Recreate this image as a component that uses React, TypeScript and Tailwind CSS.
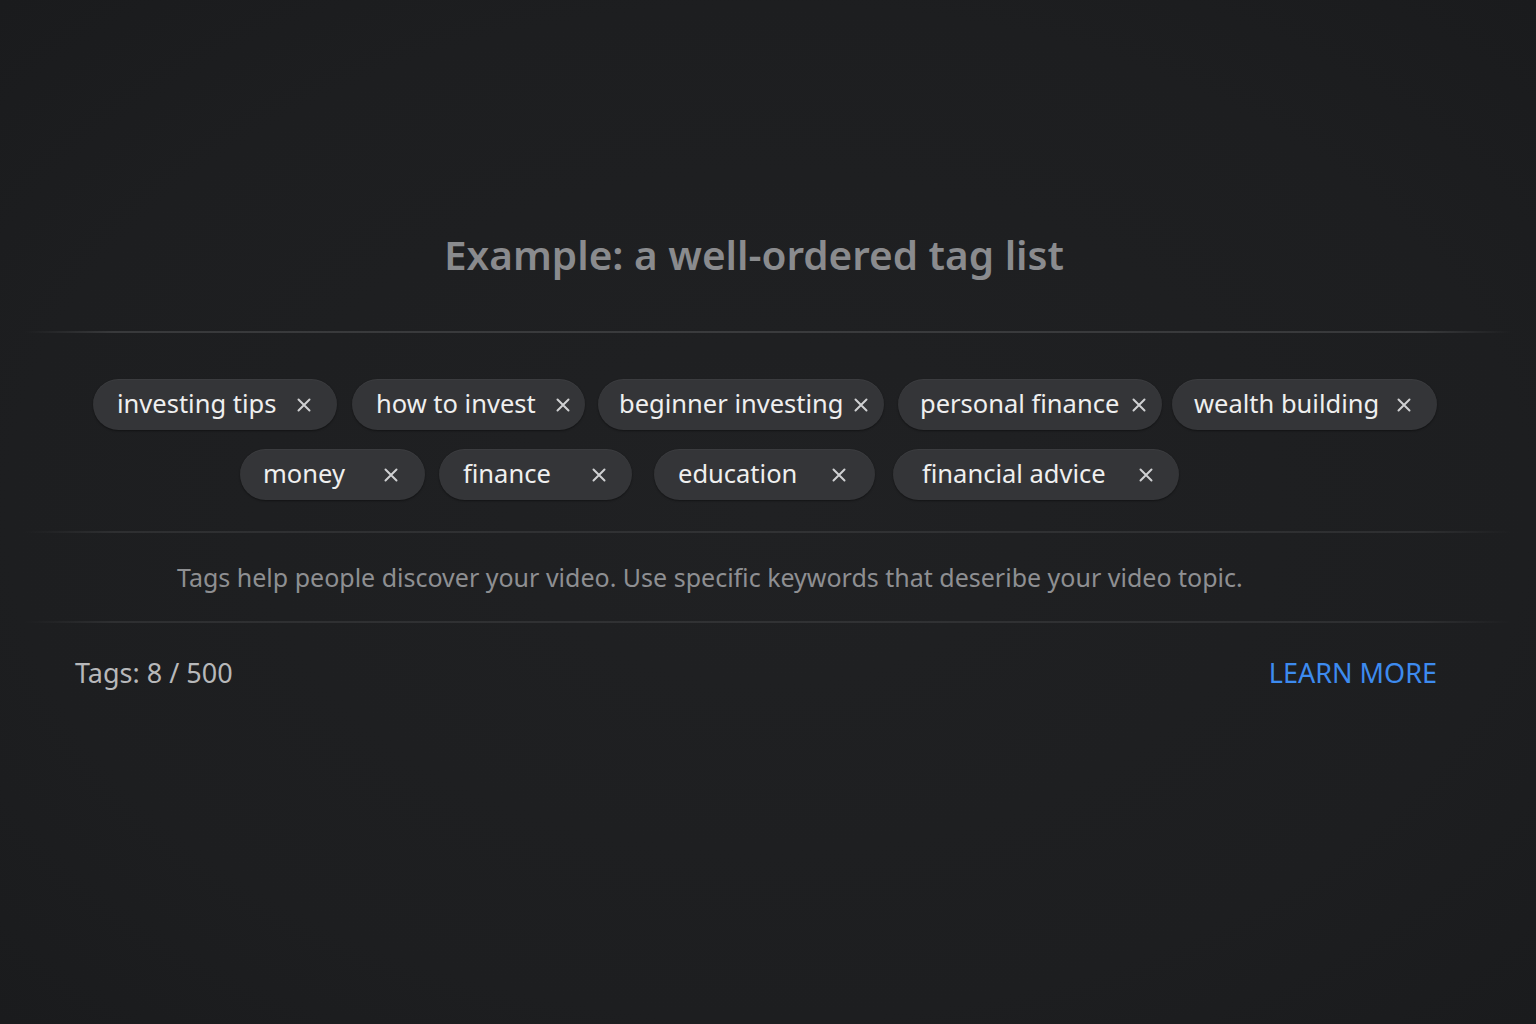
import React from 'react'

type Tag = { label: string; className: string }

// widths and paddings follow each chip in the picture
const rowOne: Tag[] = [
  { label: 'investing tips', className: 'w-[244px] pl-[24px] pr-[25px]' },
  { label: 'how to invest', className: 'w-[233px] ml-[15px] pl-[24px] pr-[14px]' },
  { label: 'beginner investing', className: 'w-[286px] ml-[13px] pl-[21px] pr-[15px]' },
  { label: 'personal finance', className: 'w-[264px] ml-[14px] pl-[22px] pr-[15px]' },
  { label: 'wealth building', className: 'w-[265px] ml-[10px] pl-[22px] pr-[25px]' },
]

const rowTwo: Tag[] = [
  { label: 'money', className: 'w-[185px] pl-[23px] pr-[26px]' },
  { label: 'finance', className: 'w-[193px] ml-[14px] pl-[24px] pr-[25px]' },
  { label: 'education', className: 'w-[221px] ml-[22px] pl-[24px] pr-[28px]' },
  { label: 'financial advice', className: 'w-[286px] ml-[18px] pl-[29px] pr-[25px]' },
]

function CloseIcon() {
  return (
    <svg width="16" height="16" viewBox="0 0 16 16" className="shrink-0 text-[#cfd0d2]">
      <path d="M2.5 2.5 13.5 13.5M13.5 2.5 2.5 13.5" stroke="currentColor" strokeWidth="2" strokeLinecap="round" />
    </svg>
  )
}

function TagChip({ tag }: { tag: Tag }) {
  return (
    <div
      className={`${tag.className} h-[51px] shrink-0 flex items-center justify-between rounded-full bg-[#343538] shadow-[inset_0_1px_0_rgba(255,255,255,0.04),0_1px_2px_rgba(0,0,0,0.4)]`}
    >
      <span className="text-[25.5px] leading-none text-[#efefef] whitespace-nowrap pb-[2px]">{tag.label}</span>
      <CloseIcon />
    </div>
  )
}

function Divider({ strong }: { strong?: boolean }) {
  return (
    <div
      className={
        strong
          ? 'mx-[24px] h-[2px] bg-[linear-gradient(90deg,transparent,#38393b_6%,#3a3b3d_50%,#38393b_94%,transparent)]'
          : 'mx-[24px] h-[2px] bg-[linear-gradient(90deg,transparent,#2e2f31_6%,#313234_50%,#2e2f31_94%,transparent)]'
      }
    />
  )
}

export default function App() {
  return (
    <div
      className="min-h-[1024px] w-full bg-[#1e1f21] bg-[radial-gradient(ellipse_at_center,#202123_0%,#1d1e20_70%,#1a1b1d_100%)] font-['Noto_Sans','Open_Sans',sans-serif]"
    >
      {/* Title */}
      <div className="pt-[228px] pr-[28px] text-center">
        <h1 className="text-[40.5px] leading-[54px] font-semibold text-[#8a8b8e]">
          Example: a well-ordered tag list
        </h1>
      </div>

      <div className="mt-[49px]">
        <Divider strong />
      </div>

      {/* Tags */}
      <div className="mt-[46px] flex flex-col gap-[19px]">
        <div className="flex pl-[93px]">
          {rowOne.map((t) => (
            <TagChip key={t.label} tag={t} />
          ))}
        </div>
        <div className="flex pl-[240px]">
          {rowTwo.map((t) => (
            <TagChip key={t.label} tag={t} />
          ))}
        </div>
      </div>

      <div className="mt-[31px]">
        <Divider />
      </div>

      {/* Description */}
      <p className="mt-[28px] pl-[177px] text-[25px] leading-[32px] text-[#8e8f92]">
        Tags help people discover your video. Use specific keywords that deseribe your video topic.
      </p>

      <div className="mt-[28px]">
        <Divider />
      </div>

      {/* Footer */}
      <div className="mt-[34px] flex items-center justify-between pl-[75px] pr-[99px]">
        <span className="text-[27px] leading-[32px] text-[#b7b8ba]">Tags: 8 / 500</span>
        <button className="text-[27px] leading-[32px] text-[#3d8bef]">LEARN MORE</button>
      </div>
    </div>
  )
}
